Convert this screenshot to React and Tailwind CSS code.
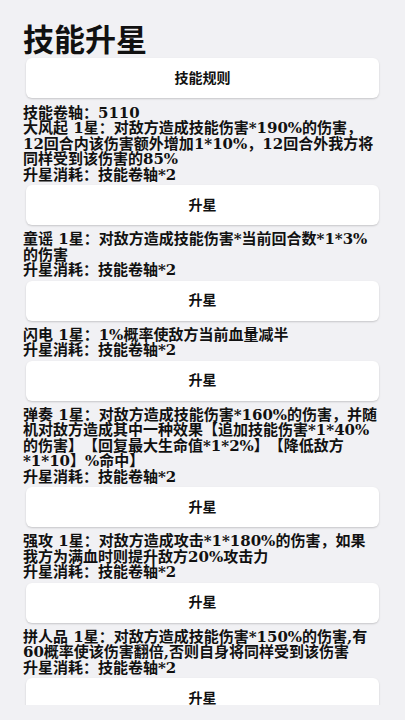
const SKILLS = [
  {
    name: '大风起',
    desc: '对敌方造成技能伤害*190%的伤害，12回合内该伤害额外增加1*10%，12回合外我方将同样受到该伤害的85%',
  },
  { name: '童谣', desc: '对敌方造成技能伤害*当前回合数*1*3%的伤害' },
  { name: '闪电', desc: '1%概率使敌方当前血量减半' },
  {
    name: '弹奏',
    desc: '对敌方造成技能伤害*160%的伤害，并随机对敌方造成其中一种效果【追加技能伤害*1*40%的伤害】【回复最大生命值*1*2%】【降低敌方*1*10】%命中】',
  },
  { name: '强攻', desc: '对敌方造成攻击*1*180%的伤害，如果我方为满血时则提升敌方20%攻击力' },
  { name: '拼人品', desc: '对敌方造成技能伤害*150%的伤害,有60概率使该伤害翻倍,否则自身将同样受到该伤害' },
]

function Button({ label }) {
  return (
    <button className="shrink-0 ml-[3px] mr-0 h-10 bg-white rounded-md shadow-[0_1px_2px_rgba(0,0,0,0.18)] text-[14px] font-bold text-[#111] flex items-center justify-center">
      {label}
    </button>
  )
}

export default function App() {
  return (
    <div
      className="h-[720px] bg-[#f1f1f4] text-[#111] [text-spacing-trim:space-all]"
      style={{ fontFamily: '"DejaVu Serif", "Noto Sans CJK SC", serif' }}
    >
      <div className="h-[705px] overflow-hidden pl-[23px] pr-[26px] pt-[20px] flex flex-col">
        <h1
          className="shrink-0 text-[31px] leading-[36px] font-bold mb-[2px]"
          style={{ fontFamily: '"Noto Sans CJK SC", sans-serif' }}
        >
          技能升星
        </h1>
        <Button label="技能规则" />
        <p className="shrink-0 mt-[7px] text-[15px] leading-[16px] font-bold">技能卷轴：5110</p>

        {SKILLS.map((s) => (
          <div key={s.name} className="shrink-0 flex flex-col">
            <div className="text-[15px] leading-[15.5px] font-bold">
              <p>
                {s.name} 1星：{s.desc}
              </p>
              <p>升星消耗：技能卷轴*2</p>
            </div>
            <div className="mt-[2px] mb-[7px] flex flex-col">
              <Button label="升星" />
            </div>
          </div>
        ))}
      </div>
    </div>
  )
}
